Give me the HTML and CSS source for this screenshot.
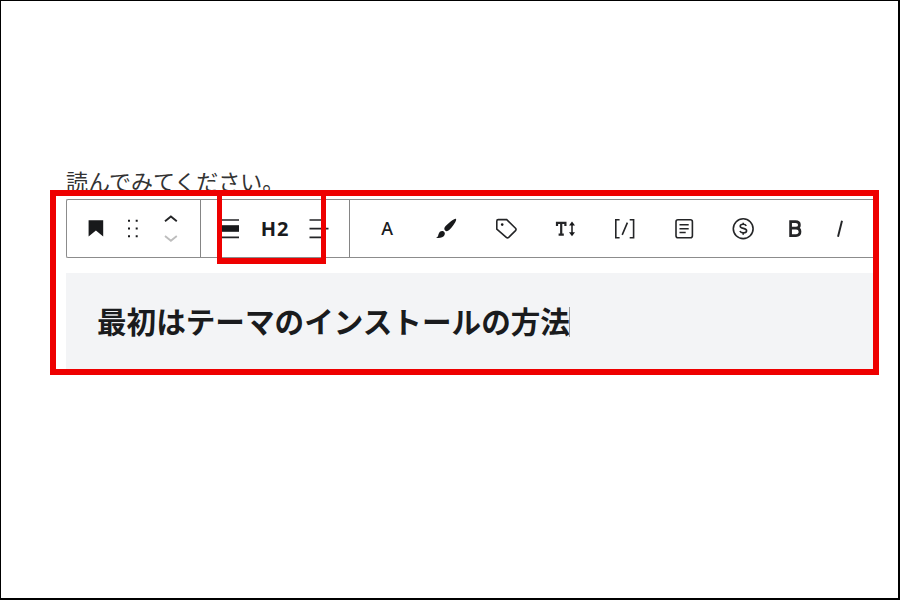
FILE: index.html
```html
<!DOCTYPE html>
<html lang="ja">
<head>
<meta charset="utf-8">
<title>見出しブロック</title>
<link rel="stylesheet" href="styles.css">
</head>
<body>
<main class="page">
  <p class="lead">読んでみてください。</p>
  <section class="callout">
    <div class="toolbar">
      <div class="group group-block">
        <span class="tool"><svg width="24" height="24" viewBox="0 0 24 24"><path class="solid" d="M4.6 3.2h14.6v16.4l-7.3-6-7.3 6z"/></svg></span>
        <span class="tool"><svg width="24" height="24" viewBox="0 0 24 24"><path class="solid" d="M7 2.7h2v2H7zM14.7 2.7h2v2h-2zM7 10.5h2v2H7zM14.7 10.5h2v2h-2zM7 18.2h2v2H7zM14.7 18.2h2v2h-2z"/></svg></span>
        <span class="tool"><svg width="24" height="32" viewBox="0 0 24 32"><path class="line arrow" d="M6 8.2l5.9-4.8 5.9 4.8"/><path class="line arrow faint" d="M6 23.1l5.9 4.6 5.9-4.6"/></svg></span>
      </div>
      <div class="group group-type">
        <span class="tool"><svg width="24" height="24" viewBox="0 0 24 24"><path class="solid" d="M3 8.2h17v6.6H3z"/><path class="line rule" d="M3 3h17M3 20.4h17"/></svg></span>
        <span class="tool level">H2</span>
        <span class="tool"><svg width="24" height="24" viewBox="0 0 24 24"><path class="line rule" d="M2.5 3h12M2.5 11.6h19M2.5 20.3h12"/></svg></span>
        <span class="mark"></span>
      </div>
      <div class="group group-format">
        <span class="tool letter">A</span>
        <span class="tool"><svg width="24" height="24" viewBox="0 0 24 24"><path class="solid" d="M22 1.9c1.2 1-3.5 8-6.8 11.2-1.4 1.3-3 1.5-4.1.4-1.2-1.2-1-2.9.5-4.4 3-3.1 9.2-8.1 10.4-7.2zM9.4 14.3c1.5.7 1.9 2.4 1 4-1.2 2.1-4.6 3.2-8.4 2.5 1.8-.7 2.1-1.8 2.5-3.5.6-2.5 2.8-3.8 4.9-3z"/></svg></span>
        <span class="tool"><svg width="24" height="24" viewBox="0 0 24 24"><path class="line" d="M2.8 4a1.4 1.4 0 0 1 1.4-1.4h8.5l8.8 8.6a1.8 1.8 0 0 1 0 2.4l-6.8 6.8a1.8 1.8 0 0 1-2.4 0l-9.5-8.3z"/><circle class="solid" cx="8.2" cy="7.6" r="1.3"/></svg></span>
        <span class="tool"><svg width="24" height="24" viewBox="0 0 24 24"><path class="line heavy" d="M4 9.1V5.8h8.4v3.3M8.2 5.8v12M5.6 17.7h5.2"/><path class="line" d="M19 6.7v10.5"/><path class="solid" d="M19 4.5l3 4h-6zM19 19.2l3-4h-6z"/></svg></span>
        <span class="tool"><svg width="24" height="24" viewBox="0 0 24 24"><path class="line" d="M7.6 2.7H3.8v18h3.8M17.7 2.7h3.9v18h-3.9M15.4 5.6l-5.2 12.3"/></svg></span>
        <span class="tool"><svg width="24" height="24" viewBox="0 0 24 24"><rect class="line" x="4" y="2.7" width="16.4" height="18" rx="2"/><path class="line" d="M7.5 7.8h9.2M7.5 11.7h9.2M7.5 15.5h6.2"/></svg></span>
        <span class="tool"><svg width="24" height="24" viewBox="0 0 24 24"><circle class="line" cx="12.2" cy="11.7" r="9.9"/><path class="line" d="M15.3 8.8c-.6-1.1-1.6-1.6-3.1-1.6-1.9 0-3 .8-3 2 0 3.2 6.4 1.2 6.4 4.5 0 1.4-1.3 2.2-3.3 2.2-1.7 0-2.9-.7-3.4-1.9M12.2 5.7v1.5M12.2 16v1.7"/></svg></span>
        <span class="tool narrow"><svg width="24" height="24" viewBox="0 0 24 24"><path class="line bold" d="M7.6 4.7h5c2.4 0 3.8 1.1 3.8 3.2 0 2.1-1.5 3.3-3.8 3.3h-5zM7.6 11.2h5.5c2.5 0 3.9 1.3 3.9 3.6s-1.5 3.8-4 3.8H7.6z"/></svg></span>
        <span class="tool narrow"><svg width="24" height="24" viewBox="0 0 24 24"><path class="line italic" d="M14 3.8L10 19.8"/></svg></span>
      </div>
    </div>
    <h2 class="heading"><span class="caret">最初はテーマのインストールの方法</span></h2>
  </section>
</main>
</body>
</html>
```
FILE: styles.css
```css
* { box-sizing: border-box; }

body {
  margin: 0;
  background: #fff;
  color: #1a1b1d;
  font-family: "Noto Sans CJK JP", sans-serif;
}

.page {
  height: 600px;
  padding: 164px 19px 0 49px;
  border: solid #000;
  border-width: 1px 2px 2px 1px;
  overflow: hidden;
}

.lead {
  height: 25px;
  margin: 0 0 0 16px;
  font-size: 22px;
  line-height: 30px;
  color: #333;
  white-space: nowrap;
}

.callout {
  position: relative;
  height: 185px;
  padding: 3px 0 0 10px;
  border: 6px solid #ee0000;
  background: #fff;
}

.toolbar {
  display: flex;
  height: 59px;
  border: 1px solid #8c8c8c;
  border-right: 0;
  border-radius: 2px 0 0 2px;
}

.group {
  display: flex;
  flex: none;
}

.group-block {
  width: 134px;
  padding-left: 10px;
  border-right: 1px solid #858585;
}

.group-type {
  position: relative;
  width: 149px;
  padding-left: 8px;
  border-right: 1px solid #858585;
}

.group-format { padding-left: 7.5px; }

.tool {
  display: flex;
  flex: none;
  align-items: center;
  justify-content: center;
}

.group-block .tool { width: 37.5px; }
.group-type .tool { width: 44px; }
.group-format .tool { width: 59.3px; }
.group-format .narrow { width: 45px; }

.level {
  padding-bottom: 1px;
  font: 700 20px "Noto Sans", sans-serif;
  letter-spacing: 1px;
}

.letter {
  padding-bottom: 2px;
  font: 500 18px "Noto Sans", sans-serif;
}

.mark {
  position: absolute;
  left: 16px;
  top: -9px;
  width: 109px;
  height: 73px;
  border: 6px solid #ee0000;
  border-width: 5px 5px 6px;
}

.solid { fill: #18191b; }

.line {
  fill: none;
  stroke: #242527;
  stroke-width: 1.6;
}

.arrow { stroke-width: 1.9; }
.faint { stroke: #bdbdbd; }
.rule { stroke-width: 1.7; }
.heavy { stroke-width: 2.2; }
.bold { stroke-width: 2.7; }
.italic { stroke-width: 1.9; }

.heading {
  height: 96px;
  margin: 15px 0 0;
  padding: 27px 0 0 31px;
  background: #f3f4f6;
  font-size: 29.6px;
  font-weight: 700;
  line-height: 42px;
  white-space: nowrap;
}

.caret {
  position: relative;
}

.caret::after {
  content: "";
  position: absolute;
  right: 0;
  top: 8px;
  width: 1px;
  height: 30px;
  background: #999;
}
```
